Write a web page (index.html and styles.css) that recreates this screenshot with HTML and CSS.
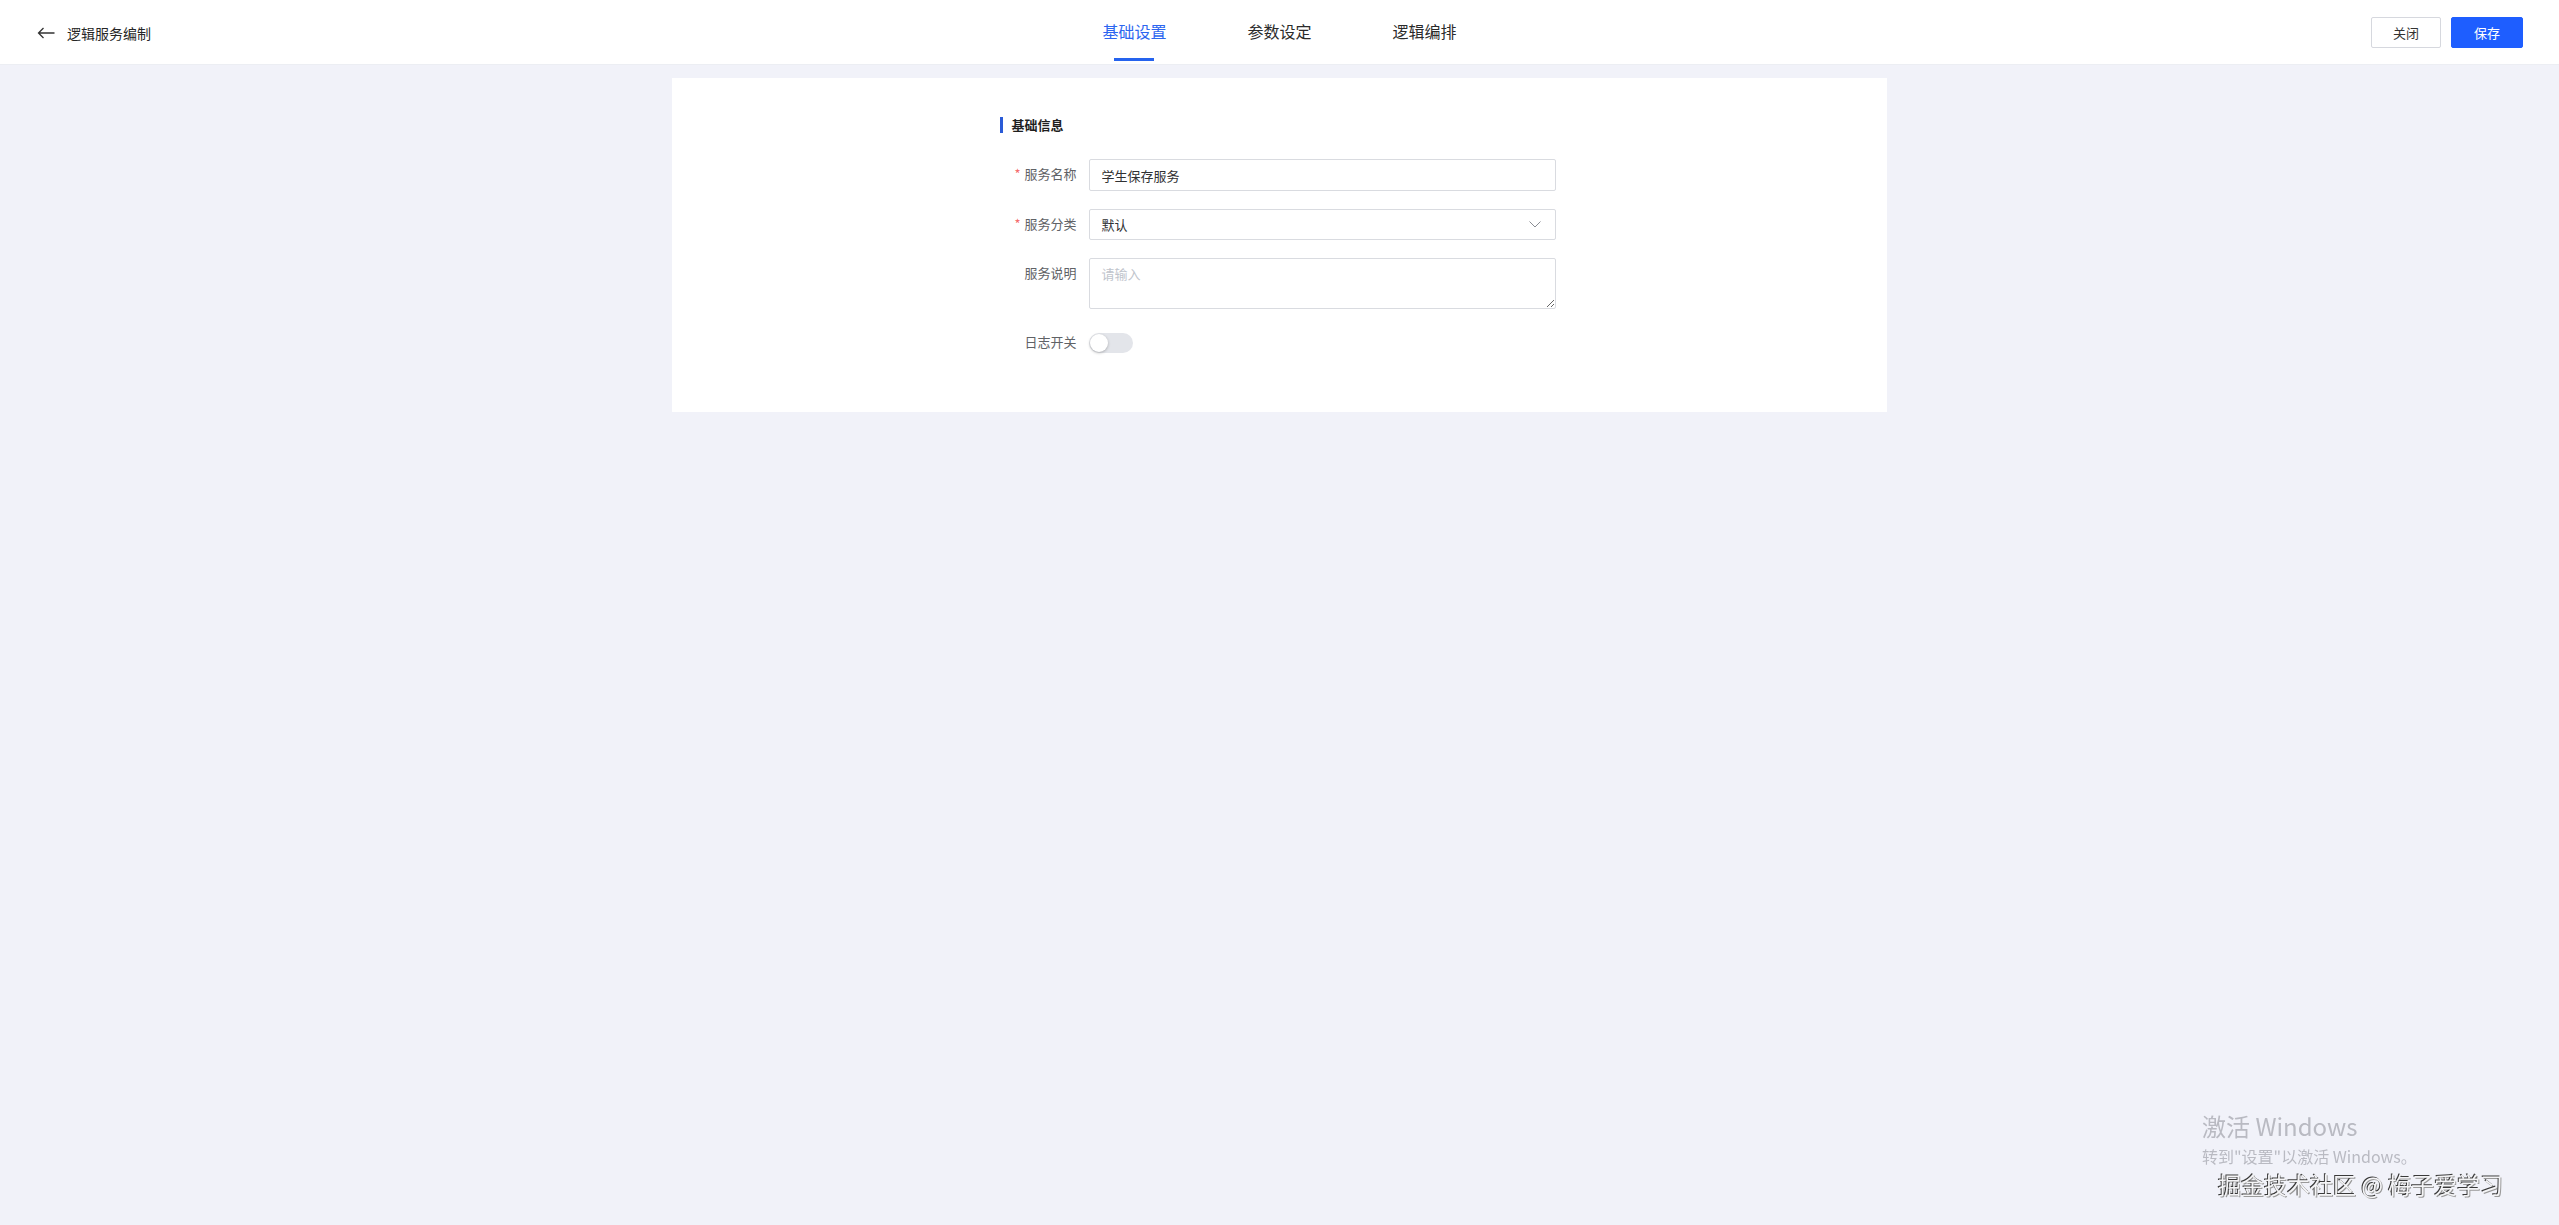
FILE: index.html
```html
<!DOCTYPE html>
<html>
<head>
    <meta charset="UTF-8">
    <title>逻辑服务编制</title>
    <link rel="stylesheet" href="styles.css">
</head>
<body>
    <div class="header">
        <div class="header-left">
            <a class="back-link" href="#">
                <svg width="18" height="12" viewBox="0 0 18 12" fill="none">
                    <path d="M17.5 6H1.5M6.5 1L1.5 6L6.5 11" stroke="#333" stroke-width="1.3"/>
                </svg>
                <span>逻辑服务编制</span>
            </a>
        </div>
        <div class="tabs">
            <a class="tab active" href="#">基础设置</a>
            <a class="tab" href="#">参数设定</a>
            <a class="tab" href="#">逻辑编排</a>
        </div>
        <div class="header-actions">
            <button class="btn">关闭</button>
            <button class="btn btn-primary">保存</button>
        </div>
    </div>

    <div class="main">
        <div class="card">
            <div class="form-wrap">
                <div class="section-title">基础信息</div>
                <form class="form">
                    <div class="form-row">
                        <label class="form-label"><span class="required">*</span>服务名称</label>
                        <input class="form-input" type="text" value="学生保存服务">
                    </div>
                    <div class="form-row">
                        <label class="form-label"><span class="required">*</span>服务分类</label>
                        <div class="form-select">
                            <span>默认</span>
                            <svg width="12" height="7" viewBox="0 0 12 7" fill="none">
                                <path d="M0.5 0.5L6 6L11.5 0.5" stroke="#8a8d94" stroke-width="1"/>
                            </svg>
                        </div>
                    </div>
                    <div class="form-row">
                        <label class="form-label">服务说明</label>
                        <textarea class="form-textarea" placeholder="请输入"></textarea>
                    </div>
                    <div class="form-row">
                        <label class="form-label">日志开关</label>
                        <div class="switch-cell">
                            <span class="switch"><span class="switch-knob"></span></span>
                        </div>
                    </div>
                </form>
            </div>
        </div>
    </div>

    <div class="watermark">
        <div class="wm-title">激活 Windows</div>
        <div class="wm-sub">转到"设置"以激活 Windows。</div>
        <div class="wm-credit">掘金技术社区 @ 梅子爱学习</div>
    </div>
</body>
</html>
```

FILE: styles.css
```css
body {
    margin: 0;
    min-height: 100vh;
    font-family: "Noto Sans CJK SC", "Noto Sans", sans-serif;
    background-color: #f1f2f9;
    color: #303133;
}

a {
    text-decoration: none;
}

.header {
    display: grid;
    grid-template-columns: 1fr auto 1fr;
    align-items: center;
    height: 64px;
    background-color: #fff;
    border-bottom: 1px solid #eceef3;
}

.header-left {
    padding-left: 37px;
}

.back-link {
    display: inline-flex;
    align-items: center;
    gap: 12px;
    font-size: 14px;
    line-height: 20px;
    color: #262626;
}

.tabs {
    display: flex;
    gap: 81px;
    height: 64px;
}

.tab {
    position: relative;
    display: flex;
    align-items: center;
    height: 60px;
    padding-top: 1px;
    box-sizing: border-box;
    font-size: 16px;
    color: #2b2b2b;
}

.tab.active {
    color: #2d66f0;
}

.tab.active::after {
    content: "";
    position: absolute;
    left: 50%;
    bottom: -1px;
    width: 40px;
    height: 3px;
    margin-left: -20px;
    background-color: #2563ee;
}

.header-actions {
    display: flex;
    justify-content: flex-end;
    gap: 10px;
    padding-right: 36px;
}

.btn {
    height: 31px;
    width: 70px;
    padding: 0;
    border: 1px solid #d6d8de;
    border-radius: 2px;
    background-color: #fff;
    font-family: inherit;
    font-size: 13px;
    color: #333;
    cursor: pointer;
}

.btn-primary {
    width: 72px;
    border-color: #1e5eff;
    background-color: #1e5eff;
    color: #fff;
}

.main {
    padding-top: 13px;
}

.card {
    width: 1215px;
    margin: 0 auto;
    padding: 39px 0 53px;
    background-color: #fff;
}

.form-wrap {
    width: 560px;
    margin: 0 auto;
}

.section-title {
    height: 16px;
    line-height: 16px;
    padding-left: 9px;
    border-left: 3px solid #2a5bd7;
    font-size: 13px;
    font-weight: bold;
    color: #1f1f1f;
}

.form {
    margin-top: 26px;
}

.form-row {
    display: flex;
    margin-bottom: 18px;
}

.form-row:last-child {
    margin-bottom: 0;
}

.form-label {
    width: 89px;
    flex: none;
    box-sizing: border-box;
    padding-right: 12px;
    text-align: right;
    font-size: 13px;
    line-height: 30px;
    color: #606266;
}

.required {
    color: #f56c6c;
    margin-right: 4px;
}

.form-input,
.form-select,
.form-textarea {
    width: 467px;
    box-sizing: border-box;
    border: 1px solid #d9dbe0;
    border-radius: 2px;
    background-color: #fff;
    font-family: inherit;
    font-size: 13px;
    color: #303133;
}

.form-input {
    height: 32px;
    padding: 0 12px;
    outline: none;
}

.form-select {
    display: flex;
    align-items: center;
    justify-content: space-between;
    height: 31px;
    padding: 0 14px 0 12px;
}

.form-textarea {
    height: 51px;
    padding: 5px 12px;
    line-height: 20px;
    outline: none;
}

.form-textarea::placeholder {
    color: #c0c4cc;
}

.switch-cell {
    display: flex;
    align-items: center;
    height: 32px;
}

.switch {
    position: relative;
    display: inline-block;
    width: 44px;
    height: 20px;
    border-radius: 10px;
    background-color: #e3e5ea;
}

.switch-knob {
    position: absolute;
    left: 1px;
    top: 1px;
    width: 18px;
    height: 18px;
    border-radius: 50%;
    background-color: #fff;
    box-shadow: 0 1px 3px rgba(0, 0, 0, 0.25);
}

.watermark {
    position: fixed;
    left: 2202px;
    top: 1111px;
    pointer-events: none;
}

.wm-title {
    font-size: 24px;
    line-height: 30px;
    color: #b9bac2;
}

.wm-sub {
    margin-top: 4px;
    font-size: 16px;
    line-height: 22px;
    color: #b9bac2;
}

.wm-credit {
    padding-left: 16px;
    font-size: 23px;
    line-height: 35px;
    color: #f4f4f6;
    text-shadow: -1px -1px 0 #3a3a3a, 1px 1px 0 #9a9a9a;
}
```
